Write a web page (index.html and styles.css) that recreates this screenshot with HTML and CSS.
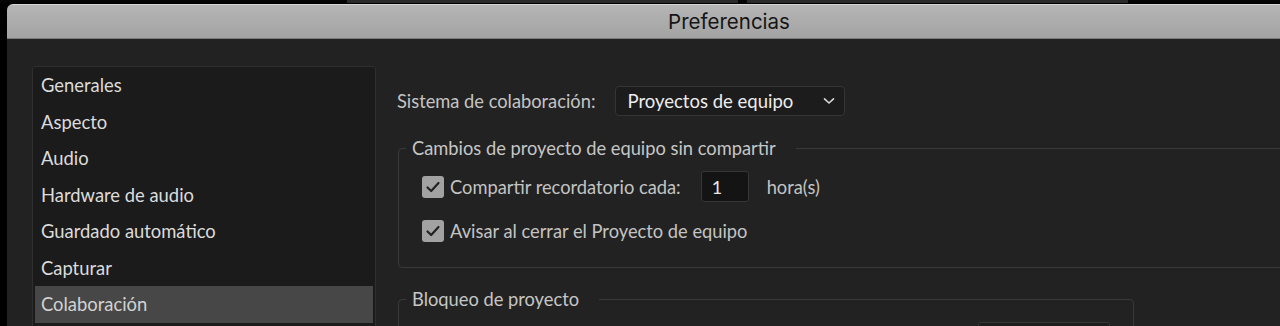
FILE: index.html
```html
<!DOCTYPE html>
<html lang="es">
<head>
    <meta charset="UTF-8">
    <meta name="viewport" content="width=device-width, initial-scale=1.0">
    <title>Preferencias</title>
    <link rel="stylesheet" href="styles.css">
</head>
<body>
    <div class="top-strip">
        <span class="strip-dark" style="width: 347px"></span>
        <span class="strip-gray" style="width: 391px"></span>
        <span class="strip-dark" style="width: 9px"></span>
        <span class="strip-gray" style="width: 381px"></span>
        <span class="strip-dark" style="width: 152px"></span>
    </div>

    <div class="window">
        <div class="title-bar">Preferencias</div>

        <div class="content">
            <!-- Category list -->
            <ul class="sidebar">
                <li>Generales</li>
                <li>Aspecto</li>
                <li>Audio</li>
                <li>Hardware de audio</li>
                <li>Guardado automático</li>
                <li>Capturar</li>
                <li class="selected">Colaboración</li>
            </ul>

            <div class="panel">
                <div class="setting-row">
                    <span class="label">Sistema de colaboración:</span>
                    <div class="dropdown">
                        <span>Proyectos de equipo</span>
                        <svg width="12" height="8" viewBox="0 0 12 8">
                            <path d="M1.5 1.8 L6 6 L10.5 1.8" fill="none" stroke="#d8d8d8" stroke-width="1.6" stroke-linecap="round" stroke-linejoin="round"/>
                        </svg>
                    </div>
                </div>

                <fieldset class="group wide">
                    <legend>Cambios de proyecto de equipo sin compartir</legend>
                    <div class="check-row first">
                        <span class="checkbox">
                            <svg width="22" height="22" viewBox="0 0 22 22"><path d="M5.5 11.5 L9.2 15 L16.5 7" fill="none" stroke="#232323" stroke-width="2.2" stroke-linecap="round" stroke-linejoin="round"/></svg>
                        </span>
                        <span class="label">Compartir recordatorio cada:</span>
                        <input class="num-input" type="text" value="1">
                        <span class="label">hora(s)</span>
                    </div>
                    <div class="check-row">
                        <span class="checkbox">
                            <svg width="22" height="22" viewBox="0 0 22 22"><path d="M5.5 11.5 L9.2 15 L16.5 7" fill="none" stroke="#232323" stroke-width="2.2" stroke-linecap="round" stroke-linejoin="round"/></svg>
                        </span>
                        <span class="label">Avisar al cerrar el Proyecto de equipo</span>
                    </div>
                </fieldset>

                <fieldset class="group narrow">
                    <legend>Bloqueo de proyecto</legend>
                    <div class="check-row first">
                        <span class="checkbox"></span>
                        <span class="spacer"></span>
                        <span class="field-box"></span>
                    </div>
                </fieldset>
            </div>
        </div>
    </div>
</body>
</html>
```

FILE: styles.css
```css
body {
    margin: 0;
    background-color: #000;
    font-family: Lato, "Open Sans", sans-serif;
    overflow: hidden;
    height: 326px;
}
.top-strip {
    display: flex;
    height: 4px;
}
.strip-dark { background-color: #050505; height: 3px; }
.strip-gray { background-color: #2b2b2b; height: 3px; }

.window {
    margin-left: 7px;
    border-top-left-radius: 6px;
    overflow: hidden;
    background-color: #222222;
    height: 322px;
}
.title-bar {
    height: 35px;
    box-sizing: border-box;
    background: linear-gradient(#b5b5b5, #a3a3a3);
    border-top: 1px solid #d6d6d6;
    border-bottom: 1px solid #7c7c7c;
    color: #151515;
    font-family: Inter, Roboto, sans-serif;
    font-size: 20.5px;
    text-align: center;
    line-height: 33px;
    padding-left: 171px;
}
.content {
    display: flex;
    align-items: flex-start;
    padding: 27px 0 0 25px;
}

/* left list */
.sidebar {
    list-style: none;
    margin: 0;
    padding: 0 2px;
    width: 338px;
    height: 280px;
    background-color: #1b1b1b;
    border: 1px solid #2f2f2f;
    border-radius: 3px;
    flex-shrink: 0;
}
.sidebar li {
    height: 36.5px;
    line-height: 36px;
    padding-left: 6px;
    font-size: 18.4px;
    color: #dcdcdc;
}
.sidebar li.selected {
    background-color: #474747;
    color: #d2d2d2;
}

/* right panel */
.panel {
    margin-left: 21px;
    padding-top: 20px;
    display: flex;
    flex-direction: column;
}
.label {
    font-size: 18.3px;
    color: #c4c4c4;
    white-space: nowrap;
}
.setting-row {
    display: flex;
    align-items: center;
}
.dropdown {
    margin-left: 20px;
    width: 230px;
    height: 30px;
    box-sizing: border-box;
    background-color: #1c1c1c;
    border: 1px solid #353535;
    border-radius: 4px;
    display: flex;
    align-items: center;
    justify-content: space-between;
    padding: 0 9px 0 11px;
    font-size: 18.5px;
    color: #ededed;
}

.group {
    margin: 20px 0 0 1px;
    padding: 0 0 25px 0;
    border: 1px solid #393939;
    border-radius: 4px;
    box-sizing: border-box;
}
.group.wide { width: 940px; }
.group.narrow { width: 736px; margin-top: 19px; }
.group legend {
    margin-left: 7px;
    padding: 0 20px 0 6px;
    font-size: 18.3px;
    line-height: 24px;
    color: #c6c6c6;
}
.check-row {
    display: flex;
    align-items: center;
    margin-top: 18px;
    padding-left: 23px;
}
.check-row.first { margin-top: 11px; }
.checkbox {
    width: 22px;
    height: 22px;
    border-radius: 3px;
    background-color: #a2a2a2;
    margin-right: 6px;
    flex-shrink: 0;
}
.num-input {
    width: 48px;
    height: 31px;
    box-sizing: border-box;
    margin: 0 18px 0 20px;
    padding-left: 10px;
    background-color: #141414;
    border: 1px solid #363636;
    border-radius: 3px;
    color: #e6e6e6;
    font-family: Lato, sans-serif;
    font-size: 18px;
}
.spacer { width: 528px; }
.field-box {
    width: 130px;
    height: 31px;
    border: 1px solid #363636;
    border-radius: 3px;
    background-color: #1c1c1c;
}
```
